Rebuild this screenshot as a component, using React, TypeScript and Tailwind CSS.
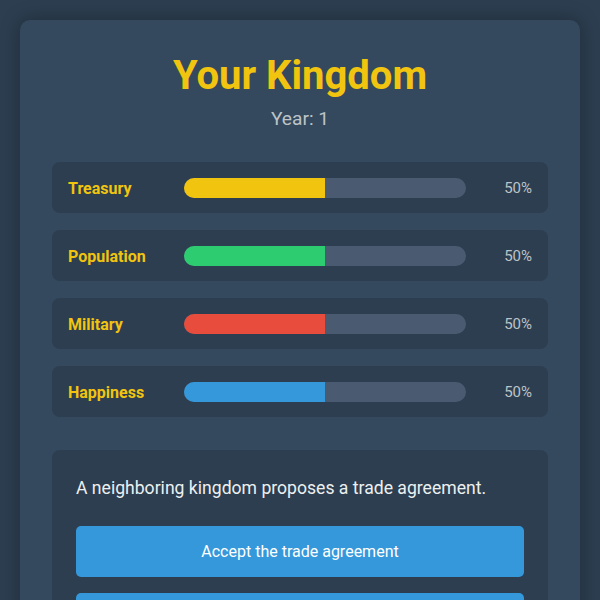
import React from "react";

const stats = [
  { name: "Treasury", value: 50, color: "#f1c40f" },
  { name: "Population", value: 50, color: "#2ecc71" },
  { name: "Military", value: 50, color: "#e74c3c" },
  { name: "Happiness", value: 50, color: "#3498db" },
];

export default function App() {
  return (
    <div
      className="min-h-[600px] w-full bg-[#2c3e50] p-5"
      style={{ fontFamily: "Roboto, 'Noto Sans', sans-serif" }}
    >
      <div className="rounded-[10px] bg-[#34495e] px-8 pt-8 pb-8 shadow-[0_0_20px_rgba(0,0,0,0.3)]">
        <h1 className="text-center text-[40px] font-bold leading-[1.2] text-[#f1c40f]">
          Your Kingdom
        </h1>
        <p className="mt-[7px] text-center text-[19.2px] leading-[1.2] text-[#bdc3c7]">
          Year: 1
        </p>
        <div className="mt-[32px] flex flex-col gap-[17px]">
          {stats.map((s) => (
            <div
              key={s.name}
              className="flex h-[51px] items-center rounded-lg bg-[#2c3e50] px-4"
            >
              <div className="w-[100px] pt-[2px] text-[16px] font-bold text-[#f1c40f]">
                {s.name}
              </div>
              <div className="ml-4 h-5 flex-1 overflow-hidden rounded-[10px] bg-[#4a5a70]">
                <div
                  className="h-full"
                  style={{ width: `${s.value}%`, backgroundColor: s.color }}
                />
              </div>
              <div className="ml-4 w-[50px] pt-[1px] text-right text-[15px] text-[#bdc3c7]">
                {s.value}%
              </div>
            </div>
          ))}
        </div>
        <div className="mt-[33px] rounded-lg bg-[#2c3e50] p-6">
          <p className="mb-[25px] pt-[1px] text-[17.6px] leading-[1.5] text-[#ecf0f1]">
            A neighboring kingdom proposes a trade agreement.
          </p>
          <div className="flex flex-col gap-4">
            <button className="h-[51px] w-full rounded-[5px] bg-[#3498db] pt-[1px] text-[16px] text-white">
              Accept the trade agreement
            </button>
            <button className="h-[51px] w-full rounded-[5px] bg-[#3498db] text-[16px] text-white">
              Decline the trade agreement
            </button>
          </div>
        </div>
      </div>
    </div>
  );
}
